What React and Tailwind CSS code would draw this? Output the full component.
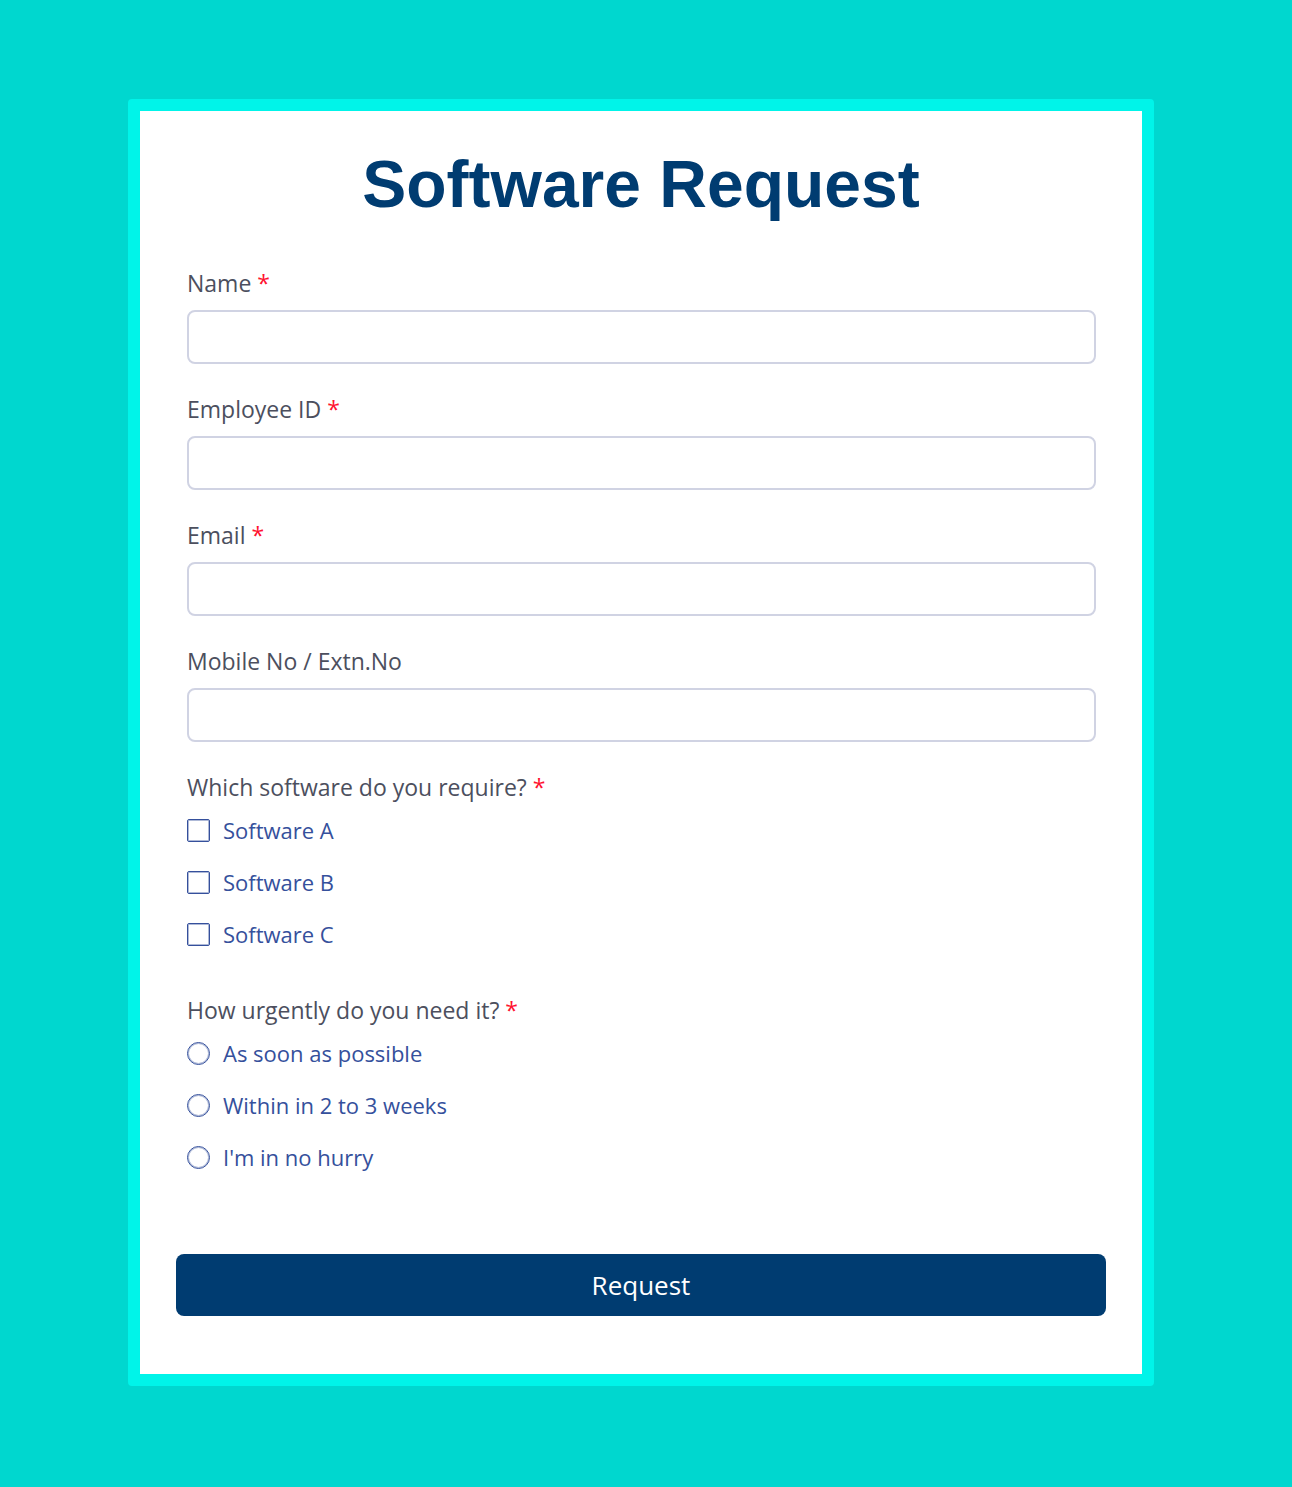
import { useState } from "react";

const textFields = [
    { name: 'name', label: 'Name', type: 'text', required: true },
    { name: 'employeeId', label: 'Employee ID', type: 'text', required: true },
    { name: 'email', label: 'Email', type: 'email', required: true },
    { name: 'phone', label: 'Mobile No / Extn.No', type: 'tel', required: false },
]

const softwareOptions = ['Software A', 'Software B', 'Software C']
const urgencyOptions = ['As soon as possible', 'Within in 2 to 3 weeks', "I'm in no hurry"]

function Required() {
    return <span className="text-[#ff1230]"> *</span>
}

function TextField({ field, value, onChange }) {
    return (
        <div className="mb-7">
            <label htmlFor={field.name} className="block text-[23px] leading-[34px] text-[#4c4f5e]">
                {field.label}
                {field.required && <Required />}
            </label>
            <input id={field.name} name={field.name} type={field.type}
                required={field.required}
                className="mt-[10px] block h-[54px] w-full rounded-lg border-2 border-[#d0d3e3] bg-white px-4 text-[23px] text-[#4c4f5e] outline-none focus:border-[#003c71]"
                value={value}
                onChange={onChange} />
        </div>
    )
}

function Choice({ type, name, label, checked, onChange }) {
    return (
        <label className="flex w-max items-center gap-[13px] text-[22px] leading-8 text-[#35509c]">
            <input type={type} name={name} value={label}
                className={`size-[23px] appearance-none border border-[#35509c] bg-white ring-1 ring-[#35509c]/40 ring-inset checked:bg-[#35509c] ${type === 'radio' ? 'rounded-full' : 'rounded-xs'}`}
                checked={checked}
                onChange={onChange} />
            {label}
        </label>
    )
}

export default function App() {
    const [formData, setFormData] = useState({ name: '', employeeId: '', email: '', phone: '' })
    const [software, setSoftware] = useState([])
    const [urgency, setUrgency] = useState('')

    const toggleSoftware = (option) => {
        setSoftware(prev => prev.includes(option)
            ? prev.filter(el => el !== option)
            : [...prev, option])
    }

    const submitRequest = (e) => {
        e.preventDefault()
        console.log({ ...formData, software, urgency })
    }

    return (
        <main className="min-h-screen bg-[#00d7cf] pt-[99px] pr-[138px] pb-[101px] pl-32 font-['Open_Sans',sans-serif]">
            <form onSubmit={submitRequest} className="rounded-sm border-12 border-[#00f4e9] bg-white px-9 pt-[35px] pb-[58px]">
                <h1 className="text-center font-['Liberation_Sans',Arial,sans-serif] text-[66px] leading-[76px] font-bold text-[#003c71]">
                    Software Request
                </h1>

                <div className="mt-11 pr-[10px] pl-[11px]">
                    {textFields.map(field => (
                        <TextField key={field.name} field={field}
                            value={formData[field.name]}
                            onChange={(e) => setFormData({ ...formData, [field.name]: e.target.value })} />
                    ))}

                    <fieldset>
                        <legend className="text-[23px] leading-[34px] text-[#4c4f5e]">
                            Which software do you require?<Required />
                        </legend>
                        <div className="mt-[10px] flex flex-col gap-5">
                            {softwareOptions.map(option => (
                                <Choice key={option} type="checkbox" name="software" label={option}
                                    checked={software.includes(option)}
                                    onChange={() => toggleSoftware(option)} />
                            ))}
                        </div>
                    </fieldset>

                    <fieldset className="mt-[43px]">
                        <legend className="text-[23px] leading-[34px] text-[#4c4f5e]">
                            How urgently do you need it?<Required />
                        </legend>
                        <div className="mt-[10px] flex flex-col gap-5">
                            {urgencyOptions.map(option => (
                                <Choice key={option} type="radio" name="urgency" label={option}
                                    checked={urgency === option}
                                    onChange={() => setUrgency(option)} />
                            ))}
                        </div>
                    </fieldset>
                </div>

                <button type="submit" className="mt-[81px] block h-[62px] w-full rounded-lg bg-[#003c71] text-[26px] text-white">
                    Request
                </button>
            </form>
        </main>
    )
}
